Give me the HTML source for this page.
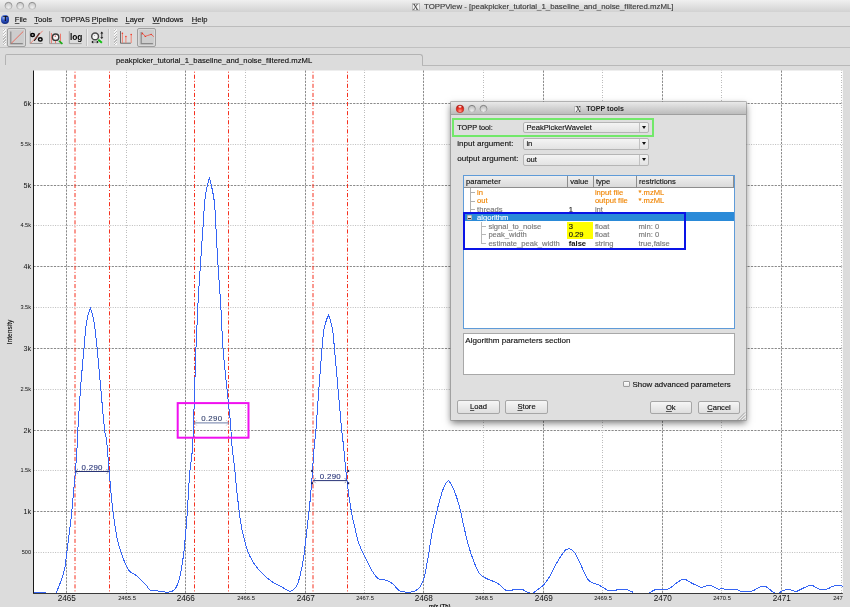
<!DOCTYPE html>
<html><head><meta charset="utf-8">
<style>
*{margin:0;padding:0;box-sizing:border-box}
html,body{width:850px;height:607px;overflow:hidden;background:#dcdcdc;font-family:"Liberation Sans",sans-serif;color:#111}
#wrap div{-webkit-text-stroke:0.14px currentColor}
.abs{position:absolute}
#titlebar{left:0;top:0;width:850px;height:12px;background:linear-gradient(#f0f0f0,#e4e4e4 40%,#d2d2d2)}
.tl{position:absolute;top:1.7px;width:8.6px;height:8.6px;border-radius:50%;background:radial-gradient(circle at 50% 75%,#f4f4f4 0,#d8d8d8 45%,#c4c4c4 75%,#9c9c9c 100%);box-shadow:inset 0 0 0 0.7px #a2a2a2}
#title{left:424px;top:2px;font-size:7.85px;color:#3a3a3a;white-space:nowrap}
#menubar{left:0;top:12px;width:850px;height:15px;background:#dfdfdf;border-bottom:1px solid #bcbcbc}
.menu{position:absolute;top:3.2px;font-size:7.6px;color:#111;white-space:nowrap}
.u{text-decoration:underline;text-decoration-thickness:0.6px;text-decoration-color:#555;text-underline-offset:1.2px}
#toolbar{left:0;top:27px;width:850px;height:20.5px;background:#dcdcdc;border-bottom:1px solid #c0c0c0}
.btn{position:absolute;top:1.2px;height:18.4px;border-radius:2px}
.pressed{border:1px solid #9e9e9e;background:#cdcdcd;box-shadow:inset 0 0 0 0.5px #e6e6e6}
.grip{position:absolute;top:2px;width:3px;height:16px;background:repeating-linear-gradient(135deg,#f6f6f6 0 1px,#bdbdbd 1px 2px)}
.sep{position:absolute;top:2px;width:1px;height:17px;background:#c3c3c3;box-shadow:1px 0 0 #ededed}
#tab{left:5px;top:54px;width:418px;height:11.4px;border:1.1px solid #b3b3b3;border-bottom:none;border-radius:2px 3px 0 0;background:#dcdcdc}
#tabline{left:422px;top:64.6px;width:428px;height:1px;background:#b8b8b8}
#tabtext{left:116px;top:56px;font-size:7.7px;color:#111;white-space:nowrap}
/* dialog */
#dlg{left:450.8px;top:102px;width:295.4px;height:318px;background:#dfdfdf;box-shadow:0 0 0 0.6px #8e8e8e,0 3px 7px rgba(0,0,0,.55)}
#dtitle{left:0;top:0;width:100%;height:13px;background:linear-gradient(#e9e9e9,#bcbcbc);border-bottom:1px solid #9f9f9f}
.dtl{position:absolute;top:3px;width:8px;height:8px;border-radius:50%}
.lbl{position:absolute;font-size:8.1px;color:#111;white-space:nowrap;margin-left:-0.5px}
.combo{position:absolute;height:11.8px;border:1px solid #b5b5b5;border-radius:2px;background:linear-gradient(#f4f4f4,#e3e3e3);font-size:7.6px;padding-left:2.2px;line-height:10.2px;color:#111}
.combo .arr{position:absolute;right:0;top:0;width:9px;height:100%;border-left:1px solid #c2c2c2}
.combo .arr:after{content:"";position:absolute;left:2.2px;top:3.6px;border-left:2.4px solid transparent;border-right:2.4px solid transparent;border-top:3px solid #111}
#table{left:12.3px;top:72.8px;width:271.8px;height:154px;background:#fff;border:1px solid #5f9bd8}
.hdr{position:absolute;top:0;height:12.4px;background:linear-gradient(#efefef,#dadada);border-right:1px solid #8d8d8d;border-bottom:1px solid #8d8d8d;font-size:7.6px;padding-left:2px;line-height:11px;color:#111}
.row{position:absolute;font-size:7.6px;white-space:nowrap;line-height:8.45px}
.or{color:#f08400}.gr{color:#787878}
.btn2{position:absolute;height:13.5px;border:1px solid #a6a6a6;border-radius:2px;background:linear-gradient(#f6f6f6,#dedede);font-size:7.6px;text-align:center;line-height:12px;color:#111}
</style></head>
<body><div id="wrap" style="position:absolute;left:0;top:0;width:850px;height:607px;will-change:transform">
<svg width="850" height="607" style="position:absolute;left:0;top:0" font-family="Liberation Sans, sans-serif">
<rect x="33.5" y="70.5" width="809.3" height="522.7" fill="#ffffff"/>
<line x1="33.5" y1="552.5" x2="842.8" y2="552.5" stroke="#bdbdbd" stroke-dasharray="1,1.4" /><line x1="33.5" y1="511.5" x2="842.8" y2="511.5" stroke="#8a8a8a" stroke-dasharray="2.2,1.2" /><line x1="33.5" y1="470.5" x2="842.8" y2="470.5" stroke="#bdbdbd" stroke-dasharray="1,1.4" /><line x1="33.5" y1="430.5" x2="842.8" y2="430.5" stroke="#8a8a8a" stroke-dasharray="2.2,1.2" /><line x1="33.5" y1="389.5" x2="842.8" y2="389.5" stroke="#bdbdbd" stroke-dasharray="1,1.4" /><line x1="33.5" y1="348.5" x2="842.8" y2="348.5" stroke="#8a8a8a" stroke-dasharray="2.2,1.2" /><line x1="33.5" y1="307.5" x2="842.8" y2="307.5" stroke="#bdbdbd" stroke-dasharray="1,1.4" /><line x1="33.5" y1="266.5" x2="842.8" y2="266.5" stroke="#8a8a8a" stroke-dasharray="2.2,1.2" /><line x1="33.5" y1="225.5" x2="842.8" y2="225.5" stroke="#bdbdbd" stroke-dasharray="1,1.4" /><line x1="33.5" y1="185.5" x2="842.8" y2="185.5" stroke="#8a8a8a" stroke-dasharray="2.2,1.2" /><line x1="33.5" y1="144.5" x2="842.8" y2="144.5" stroke="#bdbdbd" stroke-dasharray="1,1.4" /><line x1="33.5" y1="103.5" x2="842.8" y2="103.5" stroke="#8a8a8a" stroke-dasharray="2.2,1.2" /><line x1="66.5" y1="70.5" x2="66.5" y2="593.2" stroke="#8a8a8a" stroke-dasharray="2.2,1.2" /><line x1="185.5" y1="70.5" x2="185.5" y2="593.2" stroke="#8a8a8a" stroke-dasharray="2.2,1.2" /><line x1="305.5" y1="70.5" x2="305.5" y2="593.2" stroke="#8a8a8a" stroke-dasharray="2.2,1.2" /><line x1="423.5" y1="70.5" x2="423.5" y2="593.2" stroke="#8a8a8a" stroke-dasharray="2.2,1.2" /><line x1="543.5" y1="70.5" x2="543.5" y2="593.2" stroke="#8a8a8a" stroke-dasharray="2.2,1.2" /><line x1="662.5" y1="70.5" x2="662.5" y2="593.2" stroke="#8a8a8a" stroke-dasharray="2.2,1.2" /><line x1="781.5" y1="70.5" x2="781.5" y2="593.2" stroke="#8a8a8a" stroke-dasharray="2.2,1.2" /><line x1="126.5" y1="70.5" x2="126.5" y2="593.2" stroke="#bdbdbd" stroke-dasharray="1,1,1,2" stroke-dashoffset="0.5"/><line x1="245.5" y1="70.5" x2="245.5" y2="593.2" stroke="#bdbdbd" stroke-dasharray="1,1,1,2" stroke-dashoffset="0.5"/><line x1="364.5" y1="70.5" x2="364.5" y2="593.2" stroke="#bdbdbd" stroke-dasharray="1,1,1,2" stroke-dashoffset="0.5"/><line x1="483.5" y1="70.5" x2="483.5" y2="593.2" stroke="#bdbdbd" stroke-dasharray="1,1,1,2" stroke-dashoffset="0.5"/><line x1="602.5" y1="70.5" x2="602.5" y2="593.2" stroke="#bdbdbd" stroke-dasharray="1,1,1,2" stroke-dashoffset="0.5"/><line x1="721.5" y1="70.5" x2="721.5" y2="593.2" stroke="#bdbdbd" stroke-dasharray="1,1,1,2" stroke-dashoffset="0.5"/><line x1="841.5" y1="70.5" x2="841.5" y2="593.2" stroke="#bdbdbd" stroke-dasharray="1,1,1,2" stroke-dashoffset="0.5"/><line x1="75.0" y1="70.5" x2="75.0" y2="593.2" stroke="#f5301e" stroke-dasharray="4.1,2,1,2" stroke-dashoffset="4.9"/><line x1="109.5" y1="70.5" x2="109.5" y2="593.2" stroke="#f5301e" stroke-dasharray="4.1,2,1,2" stroke-dashoffset="4.9"/><line x1="194.5" y1="70.5" x2="194.5" y2="593.2" stroke="#f5301e" stroke-dasharray="4.1,2,1,2" stroke-dashoffset="4.9"/><line x1="228.5" y1="70.5" x2="228.5" y2="593.2" stroke="#f5301e" stroke-dasharray="4.1,2,1,2" stroke-dashoffset="4.9"/><line x1="313.0" y1="70.5" x2="313.0" y2="593.2" stroke="#f5301e" stroke-dasharray="4.1,2,1,2" stroke-dashoffset="4.9"/><line x1="347.5" y1="70.5" x2="347.5" y2="593.2" stroke="#f5301e" stroke-dasharray="4.1,2,1,2" stroke-dashoffset="4.9"/><path d="M34.40,593.20 C34.63,593.08 34.10,592.62 35.80,592.50 C37.50,592.38 42.73,592.38 44.60,592.50 C46.47,592.62 45.23,593.08 47.00,593.20 C48.77,593.32 53.55,593.57 55.20,593.20 C56.85,592.83 56.27,592.18 56.90,591.00 C57.53,589.82 58.17,588.22 59.00,586.10 C59.83,583.98 60.95,581.23 61.90,578.30 C62.85,575.37 63.85,573.05 64.70,568.50 C65.55,563.95 65.95,559.25 67.00,551.00 C68.05,542.75 69.92,528.70 71.00,519.00 C72.08,509.30 72.77,500.68 73.50,492.80 C74.23,484.92 74.73,480.50 75.40,471.70 C76.07,462.90 77.10,446.95 77.50,440.00 C77.90,433.05 77.30,438.50 77.80,430.00 C78.30,421.50 79.47,402.67 80.50,389.00 C81.53,375.33 83.00,359.17 84.00,348.00 C85.00,336.83 85.43,328.68 86.50,322.00 C87.57,315.32 90.40,307.90 90.40,307.90 C90.40,307.90 92.88,315.32 94.00,322.00 C95.12,328.68 95.97,336.83 97.10,348.00 C98.23,359.17 99.55,375.33 100.80,389.00 C102.05,402.67 103.65,421.50 104.60,430.00 C105.55,438.50 105.73,433.05 106.50,440.00 C107.27,446.95 108.23,460.70 109.20,471.70 C110.17,482.70 111.00,495.02 112.30,506.00 C113.60,516.98 115.33,529.27 117.00,537.60 C118.67,545.93 120.30,550.50 122.30,556.00 C124.30,561.50 126.57,567.28 129.00,570.60 C131.43,573.92 134.07,573.50 136.90,575.90 C139.73,578.30 143.82,582.67 146.00,585.00 C148.18,587.33 148.02,588.90 150.00,589.90 C151.98,590.90 154.82,590.62 157.90,591.00 C160.98,591.38 165.65,592.53 168.50,592.20 C171.35,591.87 173.25,591.07 175.00,589.00 C176.75,586.93 177.80,583.97 179.00,579.80 C180.20,575.63 181.32,569.27 182.20,564.00 C183.08,558.73 183.50,556.12 184.30,548.20 C185.10,540.28 186.12,528.82 187.00,516.50 C187.88,504.18 188.68,485.72 189.60,474.30 C190.52,462.88 191.73,459.77 192.50,448.00 C193.27,436.23 193.63,420.13 194.20,403.70 C194.77,387.27 195.27,366.18 195.90,349.40 C196.53,332.62 197.27,316.75 198.00,303.00 C198.73,289.25 199.45,279.83 200.30,266.90 C201.15,253.97 202.25,237.32 203.10,225.40 C203.95,213.48 204.33,203.40 205.40,195.40 C206.47,187.40 209.50,177.40 209.50,177.40 C209.50,177.40 213.05,192.00 214.10,200.00 C215.15,208.00 215.13,214.25 215.80,225.40 C216.47,236.55 217.28,253.80 218.10,266.90 C218.92,280.00 219.87,290.25 220.70,304.00 C221.53,317.75 221.88,333.60 223.10,349.40 C224.32,365.20 226.77,386.45 228.00,398.80 C229.23,411.15 229.87,415.97 230.50,423.50 C231.13,431.03 231.15,436.85 231.80,444.00 C232.45,451.15 233.43,457.40 234.40,466.40 C235.37,475.40 236.50,488.33 237.60,498.00 C238.70,507.67 239.85,517.35 241.00,524.40 C242.15,531.45 243.00,534.95 244.50,540.30 C246.00,545.65 247.52,551.45 250.00,556.50 C252.48,561.55 255.87,566.48 259.40,570.60 C262.93,574.72 267.72,578.63 271.20,581.20 C274.68,583.77 277.20,584.33 280.30,586.00 C283.40,587.67 287.12,591.13 289.80,591.20 C292.48,591.27 294.65,589.17 296.40,586.40 C298.15,583.63 299.07,579.65 300.30,574.60 C301.53,569.55 302.70,563.58 303.80,556.10 C304.90,548.62 305.93,538.05 306.90,529.70 C307.87,521.35 308.80,513.92 309.60,506.00 C310.40,498.08 311.05,490.57 311.70,482.20 C312.35,473.83 312.97,462.83 313.50,455.80 C314.03,448.77 314.48,444.43 314.90,440.00 C315.32,435.57 315.33,437.77 316.00,429.20 C316.67,420.63 317.90,402.13 318.90,388.60 C319.90,375.07 321.13,357.95 322.00,348.00 C322.87,338.05 323.03,334.47 324.10,328.90 C325.17,323.33 328.40,314.60 328.40,314.60 C328.40,314.60 331.50,323.33 332.50,328.90 C333.50,334.47 333.48,338.05 334.40,348.00 C335.32,357.95 336.80,375.07 338.00,388.60 C339.20,402.13 340.72,419.97 341.60,429.20 C342.48,438.43 342.70,438.25 343.30,444.00 C343.90,449.75 344.45,456.45 345.20,463.70 C345.95,470.95 346.80,479.68 347.80,487.50 C348.80,495.32 350.05,504.02 351.20,510.60 C352.35,517.18 353.42,521.52 354.70,527.00 C355.98,532.48 357.13,538.40 358.90,543.50 C360.67,548.60 363.25,553.28 365.30,557.60 C367.35,561.92 369.05,565.87 371.20,569.40 C373.35,572.93 375.85,577.03 378.20,578.80 C380.55,580.57 382.93,579.22 385.30,580.00 C387.67,580.78 390.05,581.73 392.40,583.50 C394.75,585.27 396.72,589.15 399.40,590.60 C402.08,592.05 405.90,592.15 408.50,592.20 C411.10,592.25 413.03,591.87 415.00,590.90 C416.97,589.93 418.75,588.68 420.30,586.40 C421.85,584.12 422.97,582.25 424.30,577.20 C425.63,572.15 426.98,563.58 428.30,556.10 C429.62,548.62 430.67,540.22 432.20,532.30 C433.73,524.38 435.73,515.63 437.50,508.60 C439.27,501.57 441.05,494.72 442.80,490.10 C444.55,485.48 446.47,481.55 448.00,480.90 C449.53,480.25 450.67,483.78 452.00,486.20 C453.33,488.62 454.68,491.67 456.00,495.40 C457.32,499.13 458.37,502.45 459.90,508.60 C461.43,514.75 463.43,525.05 465.20,532.30 C466.97,539.55 468.30,545.50 470.50,552.10 C472.70,558.70 475.98,567.63 478.40,571.90 C480.82,576.17 482.58,576.15 485.00,577.70 C487.42,579.25 490.70,580.18 492.90,581.20 C495.10,582.22 496.00,582.27 498.20,583.80 C500.40,585.33 504.13,589.27 506.10,590.40 C508.07,591.53 508.63,590.72 510.00,590.60 C511.37,590.48 512.27,589.87 514.30,589.70 C516.33,589.53 520.12,589.23 522.20,589.60 C524.28,589.97 525.13,591.27 526.80,591.90 C528.47,592.53 530.42,593.78 532.20,593.40 C533.98,593.02 535.72,590.88 537.50,589.60 C539.28,588.32 541.12,587.48 542.90,585.70 C544.68,583.92 546.30,581.95 548.20,578.90 C550.10,575.85 552.25,571.10 554.30,567.40 C556.35,563.70 558.58,559.63 560.50,556.70 C562.42,553.77 564.15,551.07 565.80,549.80 C567.45,548.53 569.00,548.72 570.40,549.10 C571.80,549.48 572.80,550.20 574.20,552.10 C575.60,554.00 577.27,557.43 578.80,560.50 C580.33,563.57 581.87,567.32 583.40,570.50 C584.93,573.68 586.47,577.57 588.00,579.60 C589.53,581.63 590.82,581.80 592.60,582.70 C594.38,583.60 596.80,584.12 598.70,585.00 C600.60,585.88 602.35,587.07 604.00,588.00 C605.65,588.93 606.93,590.17 608.60,590.60 C610.27,591.03 612.33,590.77 614.00,590.60 C615.67,590.43 616.57,589.77 618.60,589.60 C620.63,589.43 623.92,589.22 626.20,589.60 C628.48,589.98 630.92,591.27 632.30,591.90 C633.68,592.53 631.97,593.15 634.50,593.40 C637.03,593.65 643.93,594.05 647.50,593.40 C651.07,592.75 652.57,590.22 655.90,589.50 C659.23,588.78 664.92,589.48 667.50,589.10 C670.08,588.72 669.67,588.38 671.40,587.20 C673.13,586.02 675.75,583.35 677.90,582.00 C680.05,580.65 682.15,579.00 684.30,579.10 C686.45,579.20 688.20,581.30 690.80,582.60 C693.40,583.90 697.75,586.18 699.90,586.90 C702.05,587.62 702.20,587.18 703.70,586.90 C705.20,586.62 707.38,585.27 708.90,585.20 C710.42,585.13 711.18,585.85 712.80,586.50 C714.42,587.15 716.98,588.82 718.60,589.10 C720.22,589.38 721.32,588.15 722.50,588.20 C723.68,588.25 723.45,589.22 725.70,589.40 C727.95,589.58 733.32,588.97 736.00,589.30 C738.68,589.63 739.27,591.05 741.80,591.40 C744.33,591.75 748.72,591.85 751.20,591.40 C753.68,590.95 754.88,589.58 756.70,588.70 C758.52,587.82 760.53,586.42 762.10,586.10 C763.67,585.78 764.75,586.18 766.10,586.80 C767.45,587.42 768.85,588.78 770.20,589.80 C771.55,590.82 772.85,592.33 774.20,592.90 C775.55,593.47 776.93,593.53 778.30,593.20 C779.67,592.87 780.70,591.58 782.40,590.90 C784.10,590.22 786.25,589.02 788.50,589.10 C790.75,589.18 793.53,591.52 795.90,591.40 C798.27,591.28 800.10,589.42 802.70,588.40 C805.30,587.38 808.80,585.18 811.50,585.30 C814.20,585.42 816.32,588.47 818.90,589.10 C821.48,589.73 824.75,589.55 827.00,589.10 C829.25,588.65 830.48,587.08 832.40,586.40 C834.32,585.72 836.80,585.00 838.50,585.00 C840.20,585.00 841.92,586.17 842.60,586.40" fill="none" stroke="#3464f4" stroke-width="1" stroke-linejoin="round" shape-rendering="crispEdges"/><line x1="33.5" y1="70.5" x2="33.5" y2="593.5" stroke="#1a1a1a" stroke-width="1"/><line x1="33" y1="593.5" x2="842.8" y2="593.5" stroke="#3a3a3a" stroke-width="1"/><line x1="75.3" y1="471.5" x2="108.9" y2="471.5" stroke="#283478" stroke-width="1.0"/><path d="M77.8,469.0 L75.3,471.5 L77.8,474.0 M106.4,469.0 L108.9,471.5 L106.4,474.0" fill="none" stroke="#283478" stroke-width="0.8" stroke-dasharray="1,0.6"/><text x="92.2" y="469.7" font-size="7.9" letter-spacing="0.3" fill="#283478" stroke="#283478" stroke-width="0.1" text-anchor="middle">0.290</text><line x1="194.2" y1="422.9" x2="228.8" y2="422.9" stroke="#8a96b8" stroke-width="1.3"/><path d="M196.7,420.4 L194.2,422.9 L196.7,425.4 M226.3,420.4 L228.8,422.9 L226.3,425.4" fill="none" stroke="#8a96b8" stroke-width="0.8" stroke-dasharray="1,0.6"/><text x="211.8" y="421" font-size="7.9" letter-spacing="0.3" fill="#34426e" stroke="#34426e" stroke-width="0.1" text-anchor="middle">0.290</text><line x1="313.2" y1="480.6" x2="347.1" y2="480.6" stroke="#283478" stroke-width="1.0"/><path d="M315.7,478.1 L313.2,480.6 L315.7,483.1 M344.6,478.1 L347.1,480.6 L344.6,483.1" fill="none" stroke="#283478" stroke-width="0.8" stroke-dasharray="1,0.6"/><text x="330.4" y="478.9" font-size="7.9" letter-spacing="0.3" fill="#283478" stroke="#283478" stroke-width="0.1" text-anchor="middle">0.290</text><rect x="311.1" y="469.9" width="2" height="2" fill="#1a2060"/><rect x="311.1" y="482.2" width="2" height="2" fill="#1a2060"/><rect x="347.2" y="469.9" width="2" height="2" fill="#1a2060"/><rect x="347.2" y="482.2" width="2" height="2" fill="#1a2060"/><rect x="177.7" y="403.1" width="70.8" height="34.6" fill="none" stroke="#f010f0" stroke-width="2"/>
<text x="31" y="553.9" font-size="5.6" text-anchor="end" fill="#111">500</text><text x="31" y="513.5" font-size="7.2" text-anchor="end" fill="#111">1k</text><text x="31" y="471.9" font-size="5.6" text-anchor="end" fill="#111">1.5k</text><text x="31" y="432.5" font-size="7.2" text-anchor="end" fill="#111">2k</text><text x="31" y="390.9" font-size="5.6" text-anchor="end" fill="#111">2.5k</text><text x="31" y="350.5" font-size="7.2" text-anchor="end" fill="#111">3k</text><text x="31" y="308.9" font-size="5.6" text-anchor="end" fill="#111">3.5k</text><text x="31" y="268.5" font-size="7.2" text-anchor="end" fill="#111">4k</text><text x="31" y="226.9" font-size="5.6" text-anchor="end" fill="#111">4.5k</text><text x="31" y="187.5" font-size="7.2" text-anchor="end" fill="#111">5k</text><text x="31" y="145.9" font-size="5.6" text-anchor="end" fill="#111">5.5k</text><text x="31" y="105.5" font-size="7.2" text-anchor="end" fill="#111">6k</text>
<text x="66.8" y="600.8" font-size="8.2" text-anchor="middle" fill="#111">2465</text><text x="185.8" y="600.8" font-size="8.2" text-anchor="middle" fill="#111">2466</text><text x="305.8" y="600.8" font-size="8.2" text-anchor="middle" fill="#111">2467</text><text x="423.8" y="600.8" font-size="8.2" text-anchor="middle" fill="#111">2468</text><text x="543.8" y="600.8" font-size="8.2" text-anchor="middle" fill="#111">2469</text><text x="662.8" y="600.8" font-size="8.2" text-anchor="middle" fill="#111">2470</text><text x="781.8" y="600.8" font-size="8.2" text-anchor="middle" fill="#111">2471</text><text x="127" y="600.3" font-size="5.8" text-anchor="middle" fill="#111">2465.5</text><text x="246" y="600.3" font-size="5.8" text-anchor="middle" fill="#111">2466.5</text><text x="365" y="600.3" font-size="5.8" text-anchor="middle" fill="#111">2467.5</text><text x="484" y="600.3" font-size="5.8" text-anchor="middle" fill="#111">2468.5</text><text x="603" y="600.3" font-size="5.8" text-anchor="middle" fill="#111">2469.5</text><text x="722" y="600.3" font-size="5.8" text-anchor="middle" fill="#111">2470.5</text><text x="842" y="600.3" font-size="5.8" text-anchor="middle" fill="#111">2471.5</text>
<text x="0" y="0" font-size="6.6" fill="#000" stroke="#000" stroke-width="0.1" transform="translate(11.8,332) rotate(-90)" text-anchor="middle">Intensity</text>
<text x="428.9" y="608.2" font-size="5.8" fill="#000" stroke="#000" stroke-width="0.2">m/z (Th)</text>
<rect x="843" y="66" width="7" height="541" fill="#dcdcdc"/>
</svg>
<div id="titlebar" class="abs">
  <svg class="abs" style="left:0;top:0" width="40" height="12">
    <defs>
      <linearGradient id="tlr" x1="0" y1="0" x2="0" y2="1"><stop offset="0" stop-color="#7e7e7e"/><stop offset="1" stop-color="#c4c4c4"/></linearGradient>
      <radialGradient id="tlf" cx="0.5" cy="0.75" r="0.6"><stop offset="0" stop-color="#eeeeee"/><stop offset="1" stop-color="#cdcdcd"/></radialGradient>
    </defs>
    <circle cx="8.5" cy="5.9" r="3.5" fill="url(#tlf)" stroke="url(#tlr)" stroke-width="0.9"/>
    <circle cx="20.2" cy="5.9" r="3.5" fill="url(#tlf)" stroke="url(#tlr)" stroke-width="0.9"/>
    <circle cx="32.2" cy="5.9" r="3.5" fill="url(#tlf)" stroke="url(#tlr)" stroke-width="0.9"/>
  </svg>
  <div class="abs" style="left:411.5px;top:2.5px;width:8px;height:8px;background:#f4f4f4;border:0.5px solid #bbb;font-family:'Liberation Serif',serif;font-size:8.5px;line-height:7.5px;text-align:center;color:#444">X</div>
  <div id="title" class="abs">TOPPView - [peakpicker_tutorial_1_baseline_and_noise_filtered.mzML]</div>
</div>
<div id="menubar" class="abs">
  <div class="abs" style="left:1.1px;top:3.2px;width:8.4px;height:8.4px;border-radius:50%;background:radial-gradient(circle at 40% 30%,#a8c0ff 0,#3358c8 35%,#14308e 70%,#0a1850 100%);"><div style="position:absolute;left:0;top:0;width:100%;text-align:center;font-size:7px;line-height:8.4px;font-weight:bold;color:#111">T</div></div>
  <div class="menu" style="left:14.8px"><span class="u">F</span>ile</div>
  <div class="menu" style="left:34.3px"><span class="u">T</span>ools</div>
  <div class="menu" style="left:60.7px;font-size:7.35px">TOPPAS <span class="u">P</span>ipeline</div>
  <div class="menu" style="left:125.4px"><span class="u">L</span>ayer</div>
  <div class="menu" style="left:152.5px"><span class="u">W</span>indows</div>
  <div class="menu" style="left:191.8px"><span class="u">H</span>elp</div>
</div>
<div id="toolbar" class="abs">
  <div class="grip" style="left:3.2px"></div>
  <div class="btn pressed" style="left:7.4px;width:18.3px"></div>
  <div class="btn pressed" style="left:137.2px;width:18.5px"></div>
  <svg class="abs" style="left:0;top:0" width="170" height="21">
    <!-- btn1 linear -->
    <path d="M10.8,4.5 V16.6 H22.8" fill="none" stroke="#8a8a8a" stroke-width="1.2"/>
    <line x1="11.2" y1="16.4" x2="23.3" y2="4.4" stroke="#ee5544" stroke-width="0.8"/>
    <!-- btn2 percent -->
    <path d="M30.2,4.2 V16.5 H42.6" fill="none" stroke="#9a9a9a" stroke-width="1"/>
    <ellipse cx="32.6" cy="8.1" rx="1.8" ry="1.5" fill="none" stroke="#000" stroke-width="1.5"/>
    <ellipse cx="40.3" cy="12.4" rx="1.8" ry="1.6" fill="none" stroke="#000" stroke-width="1.5"/>
    <line x1="34.2" y1="13.6" x2="39.6" y2="6.2" stroke="#000" stroke-width="1.3"/>
    <line x1="30.3" y1="16.5" x2="42.7" y2="3.8" stroke="#f07060" stroke-width="0.8"/>
    <!-- btn3 zoom -->
    <path d="M49.6,4.2 V16.6 H62.3" fill="none" stroke="#a0a0a0" stroke-width="1"/>
    <path d="M51.4,6 V16.3 M60.5,6.7 V16.3 M55.5,14 V16.3" fill="none" stroke="#f06050" stroke-width="0.8"/>
    <circle cx="55.6" cy="10.2" r="3.2" fill="#f6f6f6" stroke="#3a3a3a" stroke-width="1.4"/>
    <line x1="59" y1="13.9" x2="62.4" y2="16.8" stroke="#17b017" stroke-width="1.7"/>
    <circle cx="55.3" cy="9.2" r="0.6" fill="#b22"/>
    <!-- btn4 log -->
    <path d="M69.3,4.2 V16.6 H81.7" fill="none" stroke="#a0a0a0" stroke-width="1"/>
    <text x="76.2" y="12.8" font-size="8.3" font-weight="bold" text-anchor="middle" fill="#000" font-family="Liberation Sans">log</text>
    <!-- btn5 zoom arrows -->
    <circle cx="95.1" cy="9.4" r="3.4" fill="#f6f6f6" stroke="#4a4a4a" stroke-width="1.5"/>
    <circle cx="94.6" cy="8.6" r="0.5" fill="#999"/>
    <line x1="98.3" y1="12.8" x2="101.9" y2="15.8" stroke="#14c014" stroke-width="2"/>
    <path d="M101.8,6 V10.6" fill="none" stroke="#111" stroke-width="0.8"/>
    <path d="M100.3,6.4 L101.8,4.6 L103.3,6.4 Z M100.3,10.2 L101.8,12 L103.3,10.2 Z" fill="#111"/>
    <path d="M92.5,15.1 H97.5" fill="none" stroke="#777" stroke-width="0.8"/>
    <path d="M93.2,13.6 L91.3,15.1 L93.2,16.6 Z M96.8,13.6 L98.7,15.1 L96.8,16.6 Z" fill="#111"/>
    <!-- btn6 sticks -->
    <path d="M120.5,4.1 V16.2 H130.9" fill="none" stroke="#6a6a6a" stroke-width="1"/>
    <path d="M122.4,6.2 V16 M125.9,9.4 V16 M131.2,7.4 V16" fill="none" stroke="#f47a6a" stroke-width="0.9"/>
    <circle cx="122.4" cy="6.3" r="0.8" fill="#f03a2a"/><circle cx="125.9" cy="9.5" r="0.8" fill="#f03a2a"/><circle cx="131.2" cy="7.5" r="0.8" fill="#f03a2a"/>
    <!-- btn7 line -->
    <path d="M141.2,5 V16.6 H152.9" fill="none" stroke="#8a8a8a" stroke-width="1.2"/>
    <polyline points="141.8,7.9 142.4,6.2 145.3,9.4 147.6,8.5 151.2,7.4 153.8,9.7" fill="none" stroke="#f04a3a" stroke-width="0.8"/>
    <circle cx="142.4" cy="6.2" r="0.7" fill="#e83020"/><circle cx="145.3" cy="9.4" r="0.7" fill="#e83020"/><circle cx="151.2" cy="7.4" r="0.7" fill="#e83020"/>
  </svg>
  <div class="sep" style="left:86.3px"></div>
  <div class="sep" style="left:107.6px"></div>
  <div class="grip" style="left:114px"></div>
</div>
<div id="tab" class="abs"></div>
<div id="tabline" class="abs"></div>
<div id="tabtext" class="abs">peakpicker_tutorial_1_baseline_and_noise_filtered.mzML</div>

<div id="dlg" class="abs">
  <div id="dtitle" class="abs">
    <svg class="abs" style="left:0;top:0" width="40" height="13">
      <defs>
        <radialGradient id="rdf" cx="0.5" cy="0.8" r="0.7"><stop offset="0" stop-color="#ff9a90"/><stop offset="0.55" stop-color="#ee3528"/><stop offset="1" stop-color="#b81a12"/></radialGradient>
        <linearGradient id="dtr" x1="0" y1="0" x2="0" y2="1"><stop offset="0" stop-color="#6e6e6e"/><stop offset="1" stop-color="#bdbdbd"/></linearGradient>
        <radialGradient id="dtf" cx="0.5" cy="0.8" r="0.6"><stop offset="0" stop-color="#ececec"/><stop offset="1" stop-color="#c6c6c6"/></radialGradient>
      </defs>
      <circle cx="9" cy="6.9" r="3.8" fill="url(#rdf)" stroke="#a8201a" stroke-width="0.5"/>
      <ellipse cx="9" cy="4.7" rx="1.6" ry="1" fill="#ffe6e2" opacity="0.9"/>
      <circle cx="20.9" cy="6.9" r="3.5" fill="url(#dtf)" stroke="url(#dtr)" stroke-width="0.9"/>
      <circle cx="32.5" cy="6.9" r="3.5" fill="url(#dtf)" stroke="url(#dtr)" stroke-width="0.9"/>
    </svg>
    <div class="abs" style="left:123.6px;top:4.2px;width:7px;height:7px;background:#f4f4f4;border:0.5px solid #bbb;font-family:'Liberation Serif',serif;font-size:7.5px;line-height:6.5px;text-align:center;color:#333">X</div>
    <div class="abs" style="left:135.4px;top:2.6px;font-size:7.05px;font-weight:bold;color:#222;white-space:nowrap;-webkit-text-stroke:0">TOPP tools</div>
  </div>
  <div class="abs" style="left:1.4px;top:16.3px;width:201.8px;height:18.4px;border:2px solid #72e86a"></div>
  <div class="lbl" style="left:7px;top:21.4px;font-size:7.3px">TOPP tool:</div>
  <div class="combo" style="left:72.4px;top:19.5px;width:125.8px">PeakPickerWavelet<div class="arr"></div></div>
  <div class="lbl" style="left:7px;top:36.5px">input argument:</div>
  <div class="combo" style="left:72.4px;top:35.9px;width:125.8px">in<div class="arr"></div></div>
  <div class="lbl" style="left:7px;top:52.4px">output argument:</div>
  <div class="combo" style="left:72.4px;top:51.8px;width:125.8px">out<div class="arr"></div></div>

  <div id="table" class="abs">
    <div class="hdr" style="left:0;width:104.2px">parameter</div>
    <div class="hdr" style="left:104.2px;width:25.6px">value</div>
    <div class="hdr" style="left:129.8px;width:43.2px">type</div>
    <div class="hdr" style="left:173px;width:96.8px">restrictions</div>
    <!-- tree lines -->
    <div class="abs" style="left:5.5px;top:12.4px;width:0;height:23.6px;border-left:1px solid #b0b0b0"></div>
    <div class="abs" style="left:5.5px;top:16.7px;width:5px;border-top:1px solid #b0b0b0"></div>
    <div class="abs" style="left:5.5px;top:25px;width:5px;border-top:1px solid #b0b0b0"></div>
    <div class="abs" style="left:5.5px;top:33.6px;width:5px;border-top:1px solid #b0b0b0"></div>
    <div class="row or" style="left:13px;top:13.2px;">in</div>
    <div class="row or" style="left:130.8px;top:13.2px;">input file</div>
    <div class="row or" style="left:174.4px;top:13.2px;">*.mzML</div>
    <div class="row or" style="left:13px;top:21.65px;">out</div>
    <div class="row or" style="left:130.8px;top:21.65px;">output file</div>
    <div class="row or" style="left:174.4px;top:21.65px;">*.mzML</div>
    <div class="row gr" style="left:13px;top:30.1px;">threads</div>
    <div class="row " style="left:104.7px;top:30.1px;color:#222">1</div>
    <div class="row gr" style="left:130.8px;top:30.1px;">int</div>
    <!-- algorithm row -->
    <div class="abs" style="left:0;top:36.5px;width:269.8px;height:9.1px;background:#2a8ad8"></div>
    <div class="abs" style="left:2.9px;top:39.7px;width:5px;height:5px;background:#ededed;box-shadow:inset 0 0 0 0.6px #8c8c8c"><div style="position:absolute;left:1.2px;top:2.1px;width:2.6px;height:0.8px;background:#333"></div></div>
    <div class="row " style="left:13px;top:38.55px;color:#fff">algorithm</div>
    <!-- children -->
    <div class="abs" style="left:17.3px;top:46.7px;width:0;height:20.8px;border-left:1px solid #b8b8b8"></div>
    <div class="abs" style="left:17.3px;top:50.4px;width:4.4px;border-top:1px solid #b8b8b8"></div>
    <div class="abs" style="left:17.3px;top:58.7px;width:4.4px;border-top:1px solid #b8b8b8"></div>
    <div class="abs" style="left:17.3px;top:67px;width:4.4px;border-top:1px solid #b8b8b8"></div>
    <div class="abs" style="left:103.4px;top:46.6px;width:25.6px;height:16.4px;background:#ffff00"></div>
    <div class="row gr" style="left:24.3px;top:47.0px;">signal_to_noise</div>
    <div class="row " style="left:104.7px;top:47.0px;color:#111">3</div>
    <div class="row gr" style="left:130.8px;top:47.0px;">float</div>
    <div class="row gr" style="left:174.4px;top:47.0px;">min: 0</div>
    <div class="row gr" style="left:24.3px;top:55.45px;">peak_width</div>
    <div class="row " style="left:104.7px;top:55.45px;color:#111">0.29</div>
    <div class="row gr" style="left:130.8px;top:55.45px;">float</div>
    <div class="row gr" style="left:174.4px;top:55.45px;">min: 0</div>
    <div class="row gr" style="left:24.3px;top:63.9px;">estimate_peak_width</div>
    <div class="row " style="left:104.7px;top:63.9px;color:#111;font-weight:bold;-webkit-text-stroke:0">false</div>
    <div class="row gr" style="left:130.8px;top:63.9px;">string</div>
    <div class="row gr" style="left:174.4px;top:63.9px;">true,false</div>
  </div>
  <!-- blue rect -->
  <div class="abs" style="left:12.6px;top:110px;width:222.5px;height:38.4px;border:2px solid #0a14e6"></div>

  <div class="abs" style="left:12.3px;top:231.4px;width:271.5px;height:41.2px;background:#fff;border:1px solid #a8a8a8"></div>
  <div class="lbl" style="left:15px;top:233.6px">Algorithm parameters section</div>
  <div class="abs" style="left:171.8px;top:278.6px;width:7px;height:6.8px;background:linear-gradient(#fdfdfd,#e8e8e8);border:0.8px solid #9c9c9c;border-radius:1px"></div>
  <div class="lbl" style="left:182.2px;top:278.3px;font-size:7.9px">Show advanced parameters</div>
  <div class="btn2" style="left:6.5px;top:298.3px;width:42.4px"><span class="u">L</span>oad</div>
  <div class="btn2" style="left:54.5px;top:298.3px;width:42.5px"><span class="u">S</span>tore</div>
  <div class="btn2" style="left:199px;top:298.6px;width:42px"><span class="u">O</span>k</div>
  <div class="btn2" style="left:247.5px;top:298.6px;width:41.4px"><span class="u">C</span>ancel</div>
  <svg class="abs" style="left:285.4px;top:309px" width="10" height="9"><path d="M9,1.5 L1.5,9 M9,4.5 L4.5,9 M9,7.5 L7.5,9" stroke="#8a8a8a" stroke-width="0.8"/><path d="M9.6,2.2 L2.2,9.6 M9.6,5.2 L5.2,9.6" stroke="#fafafa" stroke-width="0.6"/></svg>
</div>
</div></body></html>
